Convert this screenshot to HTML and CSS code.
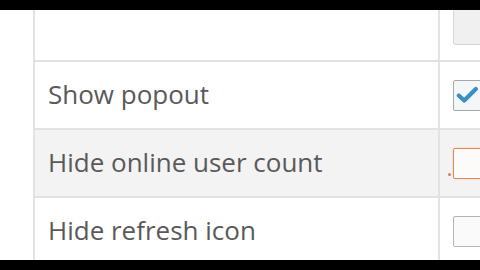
FILE: index.html
```html
<!DOCTYPE html>
<html>
<head>
<meta charset="utf-8">
<link rel="stylesheet" href="styles.css">
</head>
<body>
<div class="bar"></div>
<div class="main">
  <div class="gutter"></div>
  <div class="table">
    <div class="row first">
      <div class="label"></div>
      <div class="ctl"><div class="btn"></div></div>
    </div>
    <div class="row">
      <div class="label">Show popout</div>
      <div class="ctl"><div class="cb checked"><svg viewBox="0 0 20 20" width="22" height="22"><path d="M2.5 10.5 L7.5 15 L18 4.5" fill="none" stroke="#3b8fc0" stroke-width="3.8" stroke-linecap="round" stroke-linejoin="round"/></svg></div></div>
    </div>
    <div class="row alt">
      <div class="label">Hide online user count</div>
      <div class="ctl"><span class="dot"></span><div class="cb focus"></div></div>
    </div>
    <div class="row">
      <div class="label">Hide refresh icon</div>
      <div class="ctl"><div class="cb"></div></div>
    </div>
  </div>
</div>
<div class="bar"></div>
</body>
</html>
```
FILE: styles.css
```css
html, body {
  margin: 0;
  padding: 0;
  background: #fff;
}
body {
  width: 480px;
  height: 270px;
  overflow: hidden;
  font-family: "Open Sans", "Noto Sans", sans-serif;
}
.bar {
  height: 10px;
  background: #000;
}
.main {
  height: 250px;
  overflow: hidden;
  display: flex;
}
.gutter {
  width: 33px;
  flex: none;
}
.table {
  flex: 1;
  border-left: 2px solid #e2e2e2;
}
.row {
  display: grid;
  grid-template-columns: 403px 1fr;
  height: 66px;
  border-bottom: 2px solid #e2e2e2;
  background: #fff;
}
.row.first {
  height: 50px;
}
.row.alt {
  background: #f3f3f3;
}
.label {
  padding-left: 13px;
  display: flex;
  align-items: center;
  font-size: 26px;
  color: #595959;
  padding-bottom: 2px;
}
.ctl {
  border-left: 2px solid #e2e2e2;
  padding-left: 13px;
  display: flex;
  align-items: center;
  position: relative;
}
.row.first .ctl {
  align-items: flex-start;
}
.btn {
  width: 40px;
  height: 35px;
  background: #f0f0f0;
  border: 1px solid #d6d6d6;
  border-top: none;
  border-radius: 0 0 3px 3px;
  box-sizing: border-box;
}
.cb {
  width: 32px;
  height: 31px;
  flex: none;
  box-sizing: border-box;
  border: 1px solid #b5b5b5;
  background: #fafafa;
  border-radius: 2px;
  display: flex;
  align-items: center;
  padding-left: 2px;
}
.cb.checked {
  background: #f4f7f9;
  border-color: #a8a8a8;
}
.cb.focus {
  border: 1.5px solid #e0884f;
  box-shadow: 0 0 2px #f6c7a6;
  background: #fdfbfa;
}
.dot {
  position: absolute;
  left: 8px;
  top: 43px;
  width: 3px;
  height: 3px;
  border-radius: 50%;
  background: #c08a6a;
}
```
